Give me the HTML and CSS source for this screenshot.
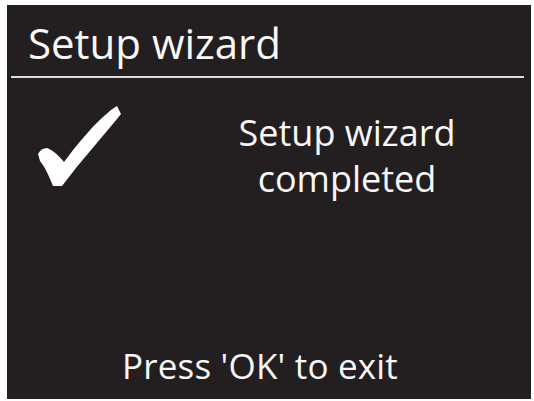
FILE: index.html
```html
<!DOCTYPE html>
<html lang="en">
<head>
<meta charset="utf-8">
<title>Setup wizard</title>
<link rel="stylesheet" href="styles.css">
</head>
<body>
<div class="screen">
  <div class="title">Setup wizard</div>
  <div class="rule"></div>
  <div class="content">
    <svg class="check" width="90" height="90" viewBox="34 100 90 90" aria-hidden="true">
      <path d="M111,110 L117,106 L121,114 C104,135 80,162 62,186 L53,186 C49,176 45,167 40,161 L38,154 C40,150 43,148 47,148 C53,150 59,156 64,162 C78,143 94,124 111,110 Z" fill="#ffffff"/>
    </svg>
    <div class="message">Setup wizard<br>completed</div>
  </div>
  <div class="footer">Press 'OK' to exit</div>
</div>
</body>
</html>
```

FILE: styles.css
```css
html, body {
  margin: 0;
  padding: 0;
  background: #ffffff;
}

body {
  width: 534px;
  height: 401px;
  overflow: hidden;
}

.screen {
  box-sizing: border-box;
  margin: 5px 0 0 7px;
  width: 524px;
  height: 394px;
  background: #231f20;
  color: #f7f7f7;
  font-family: "Open Sans", "Noto Sans", sans-serif;
  font-weight: 500;
  display: flex;
  flex-direction: column;
}

.title {
  padding: 17px 0 0 21px;
  font-size: 42px;
  line-height: 42px;
  height: 42px;
  letter-spacing: 0;
}

.rule {
  margin: 12px 7px 0 4px;
  height: 2px;
  background: #dcdcdc;
}

.content {
  display: flex;
  align-items: flex-start;
  padding-left: 27px;
}

.check {
  display: block;
  margin-top: 22px;
  flex: none;
}

.message {
  margin-left: 98px;
  margin-top: 32px;
  width: 250px;
  text-align: center;
  font-size: 36px;
  line-height: 46px;
}

.footer {
  margin-top: auto;
  padding: 0 18px 16px 0;
  text-align: center;
  font-size: 35px;
  line-height: 35px;
  letter-spacing: 0.2px;
}
```
